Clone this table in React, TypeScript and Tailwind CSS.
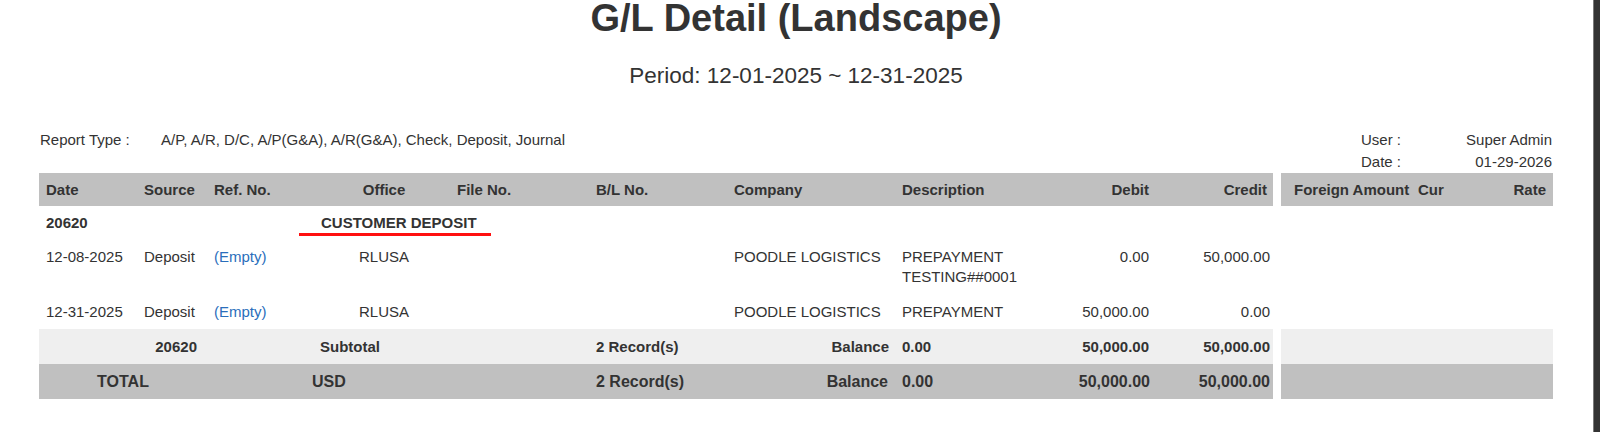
import React from 'react'

interface Entry {
  date: string
  source: string
  refNo: string
  office: string
  company: string
  description: string
  debit: string
  credit: string
}

const entries: Entry[] = [
  {
    date: '12-08-2025',
    source: 'Deposit',
    refNo: '(Empty)',
    office: 'RLUSA',
    company: 'POODLE LOGISTICS',
    description: 'PREPAYMENT TESTING##0001',
    debit: '0.00',
    credit: '50,000.00',
  },
  {
    date: '12-31-2025',
    source: 'Deposit',
    refNo: '(Empty)',
    office: 'RLUSA',
    company: 'POODLE LOGISTICS',
    description: 'PREPAYMENT',
    debit: '50,000.00',
    credit: '0.00',
  },
]

// column widths: 10 main columns, a spacer, then the foreign-currency block
const colWidths = [98, 70, 111, 132, 139, 138, 168, 139, 122, 117, 8, 125, 69, 78]

export default function App() {
  return (
    <div
      className="flex h-screen w-full bg-white text-[#333]"
      style={{ fontFamily: '"Liberation Sans", Arial, sans-serif' }}
    >
      <div className="flex-1 pl-[39px] pr-[40px]">
        {/* title */}
        <h1 className="text-center text-[38px] leading-[36px] font-bold text-[#333]">
          G/L Detail (Landscape)
        </h1>
        <div className="mt-[29px] text-center text-[22.5px] leading-[22px]">
          Period: 12-01-2025 ~ 12-31-2025
        </div>

        {/* report info */}
        <div className="mt-[42px] flex justify-between text-[15px] leading-[22px]">
          <div className="flex pl-[1px]">
            <span className="w-[121px]">Report Type :</span>
            <span>A/P, A/R, D/C, A/P(G&amp;A), A/R(G&amp;A), Check, Deposit, Journal</span>
          </div>
          <div className="mr-[1px] grid w-[191px] grid-cols-[auto_1fr]">
            <span>User :</span>
            <span className="text-right">Super Admin</span>
            <span>Date :</span>
            <span className="text-right">01-29-2026</span>
          </div>
        </div>

        <table className="w-[1514px] table-fixed text-[15px] leading-[20px]">
          <colgroup>
            {colWidths.map((w, i) => (
              <col key={i} style={{ width: w }} />
            ))}
          </colgroup>
          <thead>
            <tr className="h-[33px] font-bold whitespace-nowrap">
              <th className="bg-[#c0c0c0] pl-[7px] text-left">Date</th>
              <th className="bg-[#c0c0c0] pl-[7px] text-left">Source</th>
              <th className="bg-[#c0c0c0] pl-[7px] text-left">Ref. No.</th>
              <th className="bg-[#c0c0c0] text-center">Office</th>
              <th className="bg-[#c0c0c0] pl-[7px] text-left">File No.</th>
              <th className="bg-[#c0c0c0] pl-[7px] text-left">B/L No.</th>
              <th className="bg-[#c0c0c0] pl-[7px] text-left">Company</th>
              <th className="bg-[#c0c0c0] pl-[7px] text-left">Description</th>
              <th className="bg-[#c0c0c0] pr-[7px] text-right">Debit</th>
              <th className="bg-[#c0c0c0] pr-[6px] text-right">Credit</th>
              <th className="bg-white"></th>
              <th className="bg-[#c0c0c0] pl-[13px] text-left">Foreign Amount</th>
              <th className="bg-[#c0c0c0] pl-[12px] text-left">Cur</th>
              <th className="bg-[#c0c0c0] pr-[7px] text-right">Rate</th>
            </tr>
          </thead>
          <tbody>
            {/* account group */}
            <tr className="h-[34px] font-bold">
              <td className="pl-[7px]">20620</td>
              <td></td>
              <td></td>
              <td colSpan={2} className="pl-[3px]">
                <span className="relative inline-block leading-[20px]">
                  CUSTOMER DEPOSIT
                  <span className="absolute top-[20px] left-[-22px] h-[3px] w-[192px] bg-[#ff1010]" />
                </span>
              </td>
              <td colSpan={9}></td>
            </tr>

            {entries.map((e, idx) => (
              <tr
                key={idx}
                className={idx === 0 ? 'h-[54px] align-top' : 'h-[35px] align-middle'}
              >
                <td className={`pl-[7px] ${idx === 0 ? 'pt-[7px]' : ''}`}>{e.date}</td>
                <td className={`pl-[7px] ${idx === 0 ? 'pt-[7px]' : ''}`}>{e.source}</td>
                <td className={`pl-[7px] text-[#2a6ebb] ${idx === 0 ? 'pt-[7px]' : ''}`}>{e.refNo}</td>
                <td className={`text-center ${idx === 0 ? 'pt-[7px]' : ''}`}>{e.office}</td>
                <td></td>
                <td></td>
                <td className={`pl-[7px] ${idx === 0 ? 'pt-[7px]' : ''}`}>{e.company}</td>
                <td className={`pl-[7px] pr-[4px] ${idx === 0 ? 'pt-[7px]' : ''}`}>{e.description}</td>
                <td className={`pr-[7px] text-right ${idx === 0 ? 'pt-[7px]' : ''}`}>{e.debit}</td>
                <td className={`pr-[3px] text-right ${idx === 0 ? 'pt-[7px]' : ''}`}>{e.credit}</td>
                <td></td>
                <td></td>
                <td></td>
                <td></td>
              </tr>
            ))}

            {/* subtotal */}
            <tr className="h-[35px] font-bold">
              <td colSpan={2} className="bg-[#efefef] pr-[10px] text-right">20620</td>
              <td colSpan={3} className="bg-[#efefef] pl-[113px]">Subtotal</td>
              <td className="bg-[#efefef] pl-[7px]">2 Record(s)</td>
              <td className="bg-[#efefef] pr-[6px] text-right">Balance</td>
              <td className="bg-[#efefef] pl-[7px]">0.00</td>
              <td className="bg-[#efefef] pr-[7px] text-right">50,000.00</td>
              <td className="bg-[#efefef] pr-[3px] text-right">50,000.00</td>
              <td className="bg-white"></td>
              <td colSpan={3} className="bg-[#efefef]"></td>
            </tr>

            {/* grand total */}
            <tr className="h-[35px] text-[16px] font-bold">
              <td colSpan={2} className="bg-[#c0c0c0] text-center">TOTAL</td>
              <td colSpan={3} className="bg-[#c0c0c0] pl-[105px]">USD</td>
              <td className="bg-[#c0c0c0] pl-[7px]">2 Record(s)</td>
              <td className="bg-[#c0c0c0] pr-[7px] text-right">Balance</td>
              <td className="bg-[#c0c0c0] pl-[7px]">0.00</td>
              <td className="bg-[#c0c0c0] pr-[6px] text-right">50,000.00</td>
              <td className="bg-[#c0c0c0] pr-[3px] text-right">50,000.00</td>
              <td className="bg-white"></td>
              <td colSpan={3} className="bg-[#c0c0c0]"></td>
            </tr>
          </tbody>
        </table>
      </div>

      {/* right edge bar */}
      <div className="w-[7px] shrink-0 border-l border-[#7a7a7a] bg-[#333]" />
    </div>
  )
}
